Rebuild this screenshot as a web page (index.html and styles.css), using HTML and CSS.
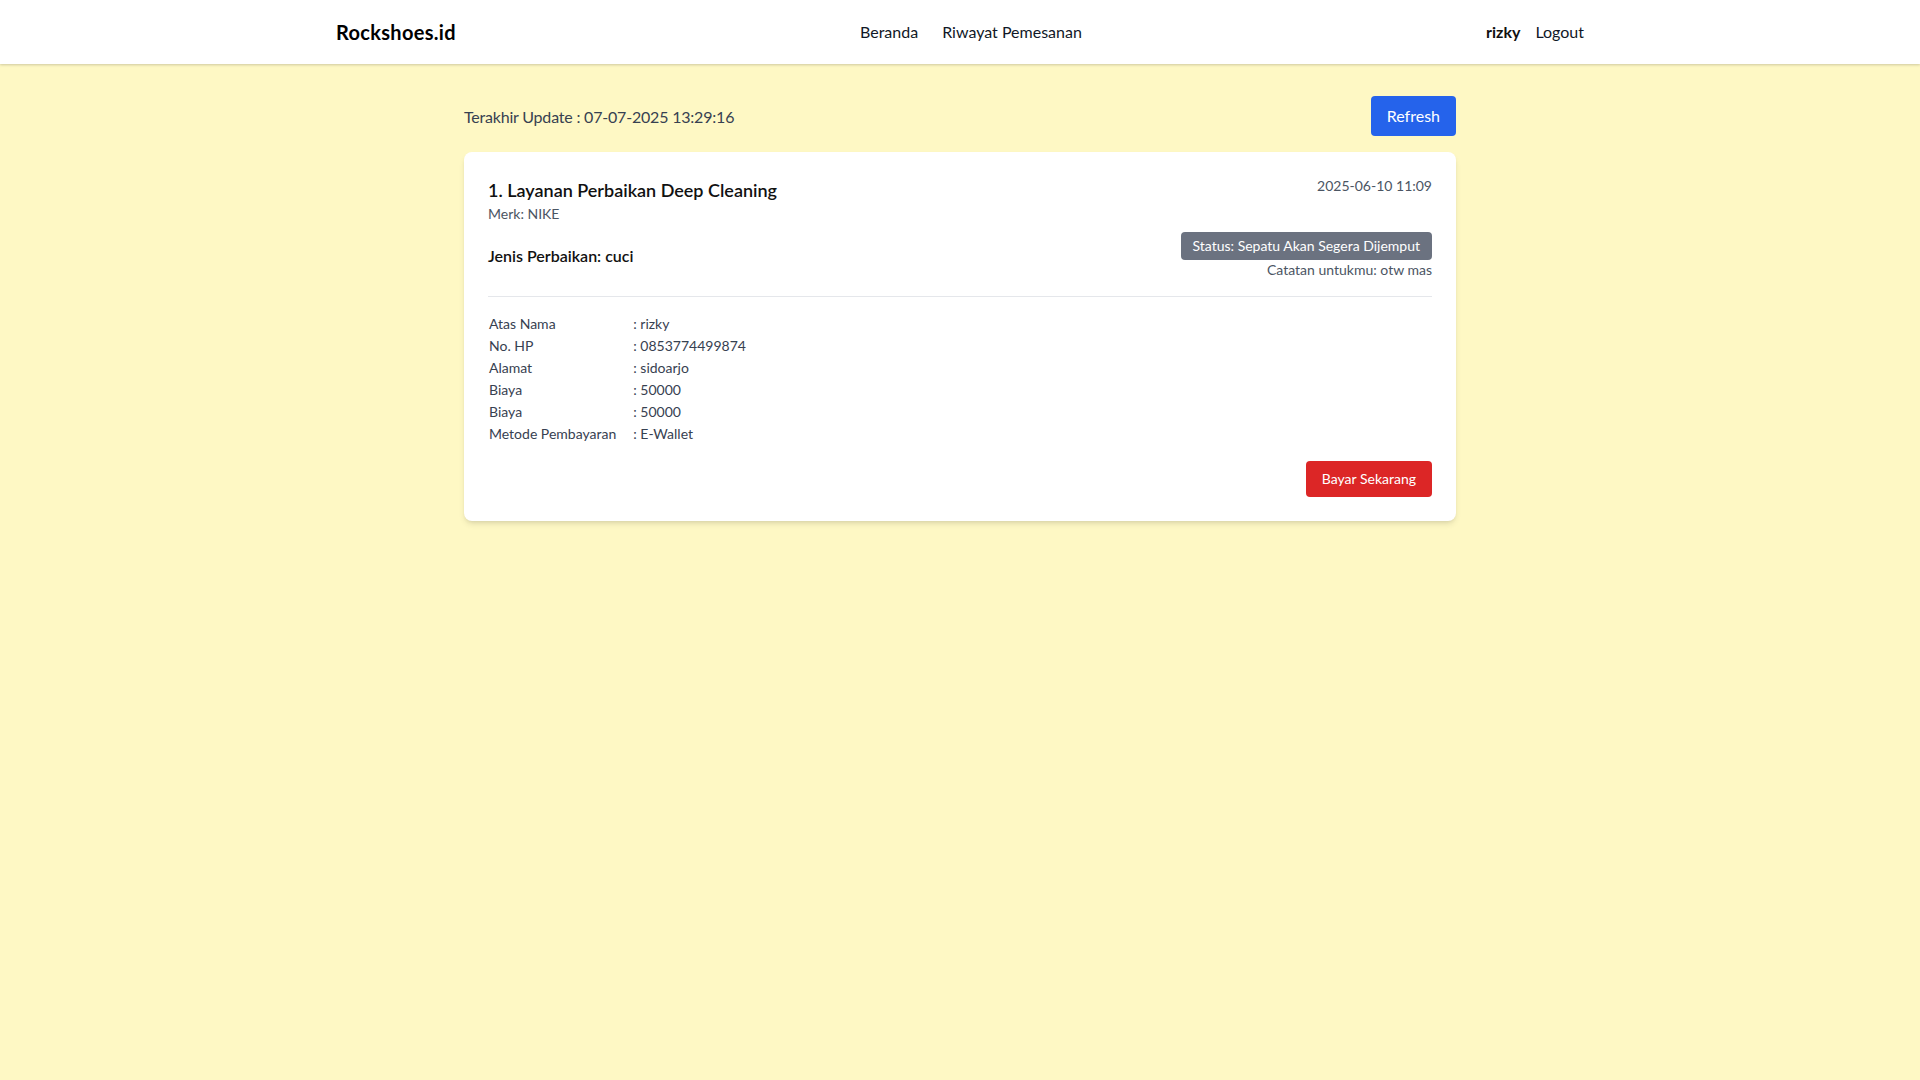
FILE: index.html
```html
<!DOCTYPE html>
<html lang="id">
<head>
<meta charset="utf-8">
<title>Rockshoes.id - Riwayat Pemesanan</title>
<link rel="stylesheet" href="styles.css">
</head>
<body>
<nav class="navbar">
  <div class="nav-inner">
    <a class="brand" href="#">Rockshoes.id</a>
    <div class="nav-links">
      <a href="#">Beranda</a>
      <a href="#">Riwayat Pemesanan</a>
    </div>
    <div class="nav-user">
      <span class="username">rizky</span>
      <a href="#">Logout</a>
    </div>
  </div>
</nav>

<main class="main">
  <div class="topbar">
    <p class="updated">Terakhir Update : 07-07-2025 13:29:16</p>
    <button class="btn btn-blue">Refresh</button>
  </div>

  <div class="card">
    <div class="card-head">
      <div>
        <h2 class="title">1. Layanan Perbaikan Deep Cleaning</h2>
        <p class="muted">Merk: NIKE</p>
      </div>
      <p class="muted">2025-06-10 11:09</p>
    </div>

    <div class="card-row">
      <p class="jenis">Jenis Perbaikan: cuci</p>
      <div class="status-col">
        <span class="badge">Status: Sepatu Akan Segera Dijemput</span>
        <p class="muted">Catatan untukmu: otw mas</p>
      </div>
    </div>

    <hr class="divider">

    <table class="details">
      <tbody>
        <tr><td class="lbl">Atas Nama</td><td>: rizky</td></tr>
        <tr><td class="lbl">No. HP</td><td>: 0853774499874</td></tr>
        <tr><td class="lbl">Alamat</td><td>: sidoarjo</td></tr>
        <tr><td class="lbl">Biaya</td><td>: 50000</td></tr>
        <tr><td class="lbl">Biaya</td><td>: 50000</td></tr>
        <tr><td class="lbl">Metode Pembayaran</td><td>: E-Wallet</td></tr>
      </tbody>
    </table>

    <div class="card-foot">
      <button class="btn btn-red">Bayar Sekarang</button>
    </div>
  </div>
</main>
</body>
</html>
```

FILE: styles.css
```css
* { box-sizing: border-box; }
html, body { margin: 0; padding: 0; }
body {
  background: #fef8c4;
  font-family: Lato, "Open Sans", "Noto Sans", sans-serif;
  color: #111827;
  min-height: 1080px;
}
p, h2 { margin: 0; }
a { color: inherit; text-decoration: none; }

.navbar {
  background: #ffffff;
  box-shadow: 0 1px 3px rgba(0,0,0,0.12), 0 1px 2px rgba(0,0,0,0.08);
}
.nav-inner {
  max-width: 1280px;
  margin: 0 auto;
  padding: 0 16px;
  height: 64px;
  display: flex;
  align-items: center;
  justify-content: space-between;
  padding-bottom: 1px;
}
.brand { font-size: 20px; font-weight: 700; color: #000; letter-spacing: 0.3px; }
.nav-links { display: flex; gap: 24px; font-size: 16px; color: #111827; }
.nav-user { display: flex; gap: 15px; font-size: 16px; color: #111827; }
.username { font-weight: 700; color: #111; }

.main {
  max-width: 1024px;
  margin: 0 auto;
  padding: 32px 16px;
}
.topbar {
  display: flex;
  justify-content: space-between;
  align-items: center;
  margin-bottom: 16px;
}
.updated { font-size: 16px; color: #374151; letter-spacing: -0.2px; }

.btn {
  border: 0;
  color: #fff;
  font-family: inherit;
  border-radius: 4px;
  cursor: pointer;
}
.btn-blue { background: #2563eb; font-size: 16px; line-height: 24px; padding: 8px 16px; }
.btn-red { background: #dc2626; font-size: 14px; line-height: 20px; padding: 8px 16px; }

.card {
  background: #fff;
  border-radius: 8px;
  box-shadow: 0 4px 6px -1px rgba(0,0,0,0.1), 0 2px 4px -2px rgba(0,0,0,0.1);
  padding: 24px;
}
.card-head { display: flex; justify-content: space-between; align-items: flex-start; }
.title { font-size: 18px; line-height: 28px; font-weight: 600; color: #111; }
.muted { font-size: 14px; line-height: 20px; color: #4b5563; }

.card-row {
  margin-top: 8px;
  display: flex;
  justify-content: space-between;
  align-items: center;
}
.jenis { font-size: 16px; line-height: 24px; font-weight: 600; color: #111; }
.status-col { display: flex; flex-direction: column; align-items: flex-end; }
.badge {
  background: #6b7280;
  color: #fff;
  font-size: 14px;
  line-height: 20px;
  padding: 4px 12px;
  border-radius: 4px;
}

.divider { border: 0; border-top: 1px solid #e5e7eb; margin: 16px 0; }

.details { border-collapse: collapse; font-size: 14px; line-height: 20px; color: #374151; }
.details td { padding: 1px; }
.details td.lbl { padding-right: 16px; }

.card-foot { margin-top: 16px; display: flex; justify-content: flex-end; }
```
